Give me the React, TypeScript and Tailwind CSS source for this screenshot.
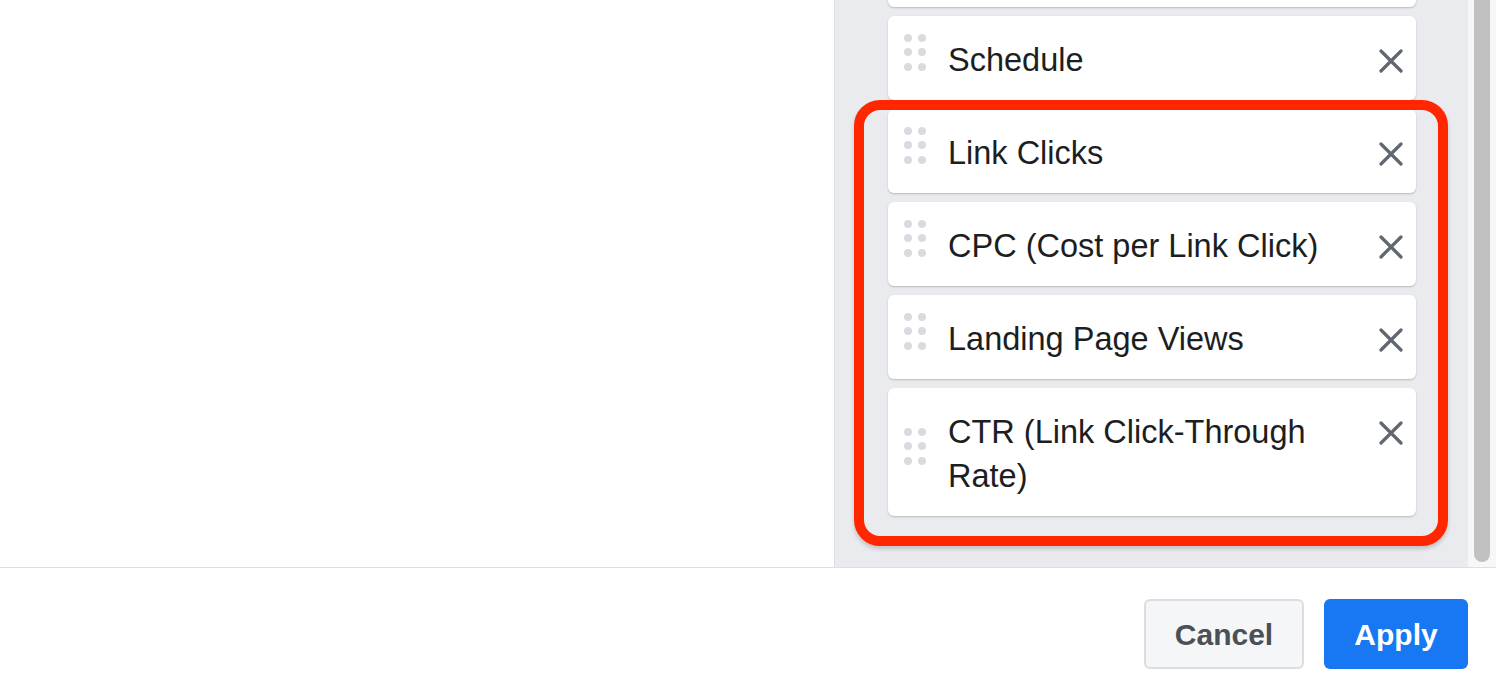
import React from "react";

const items: string[] = [
  "\u00a0",
  "Schedule",
  "Link Clicks",
  "CPC (Cost per Link Click)",
  "Landing Page Views",
  "CTR (Link Click-Through Rate)",
];

function Dots() {
  return (
    <div className="grid grid-cols-2 gap-x-[6px] gap-y-[6.5px] w-[22px] self-center -translate-y-[6px] shrink-0">
      {[0, 1, 2, 3, 4, 5].map((i) => (
        <span key={i} className="block w-[8px] h-[8px] rounded-full bg-[#d9dbe0]" />
      ))}
    </div>
  );
}

function CloseIcon() {
  return (
    <svg width="24" height="24" viewBox="0 0 24 24" className="block">
      <path d="M2 2 L22 22 M22 2 L2 22" stroke="#606770" strokeWidth="3.2" strokeLinecap="round" fill="none" />
    </svg>
  );
}

function Card({ label }: { label: string }) {
  return (
    <div className="flex items-start bg-white rounded-[6px] shadow-[0_1px_2px_rgba(0,0,0,0.22)] pl-[16px] pr-[13px] py-[20px]">
      <Dots />
      <div className="flex-1 ml-[22px] mr-[30px] text-[32.5px] leading-[44px] text-[#1c1e21] translate-y-[2px]">{label}</div>
      <div className="mt-[13px] shrink-0">
        <CloseIcon />
      </div>
    </div>
  );
}

export default function App() {
  return (
    <div
      className="w-[1496px] h-[692px] bg-white flex flex-col overflow-hidden"
      style={{ fontFamily: '"Liberation Sans", Arial, Helvetica, sans-serif' }}
    >
      <div className="flex h-[567px]">
        <div className="flex-1 bg-white" />
        <div className="w-[662px] flex border-l border-[#dddfe2]">
          <div className="relative flex-1 bg-[#e9ebee] overflow-hidden">
            <div className="flex flex-col gap-[9px] pl-[53px] pr-[52px] mt-[-77px]">
              {items.map((t, i) => (
                <Card key={i} label={t} />
              ))}
            </div>
            <div className="absolute left-[19px] top-[100px] w-[594px] h-[446px] rounded-[26px] border-[10px] border-[#ff2600] shadow-[0_3px_4px_rgba(0,0,0,0.18)]" />
          </div>
          <div className="w-[28px] bg-[#f7f7f7] flex justify-center">
            <div className="w-[16px] h-[562px] rounded-b-full bg-[#c1c1c1]" />
          </div>
        </div>
      </div>
      <div className="flex-1 border-t border-[#dddfe2] flex justify-end items-start gap-[20px] pr-[28px] pt-[31px]">
        <button className="w-[160px] h-[70px] rounded-[6px] border-2 border-[#dadde1] bg-[#f5f6f7] text-[#4b4f56] text-[30px] font-bold">
          Cancel
        </button>
        <button className="w-[144px] h-[70px] rounded-[6px] bg-[#1877f2] text-white text-[30px] font-bold">
          Apply
        </button>
      </div>
    </div>
  );
}
